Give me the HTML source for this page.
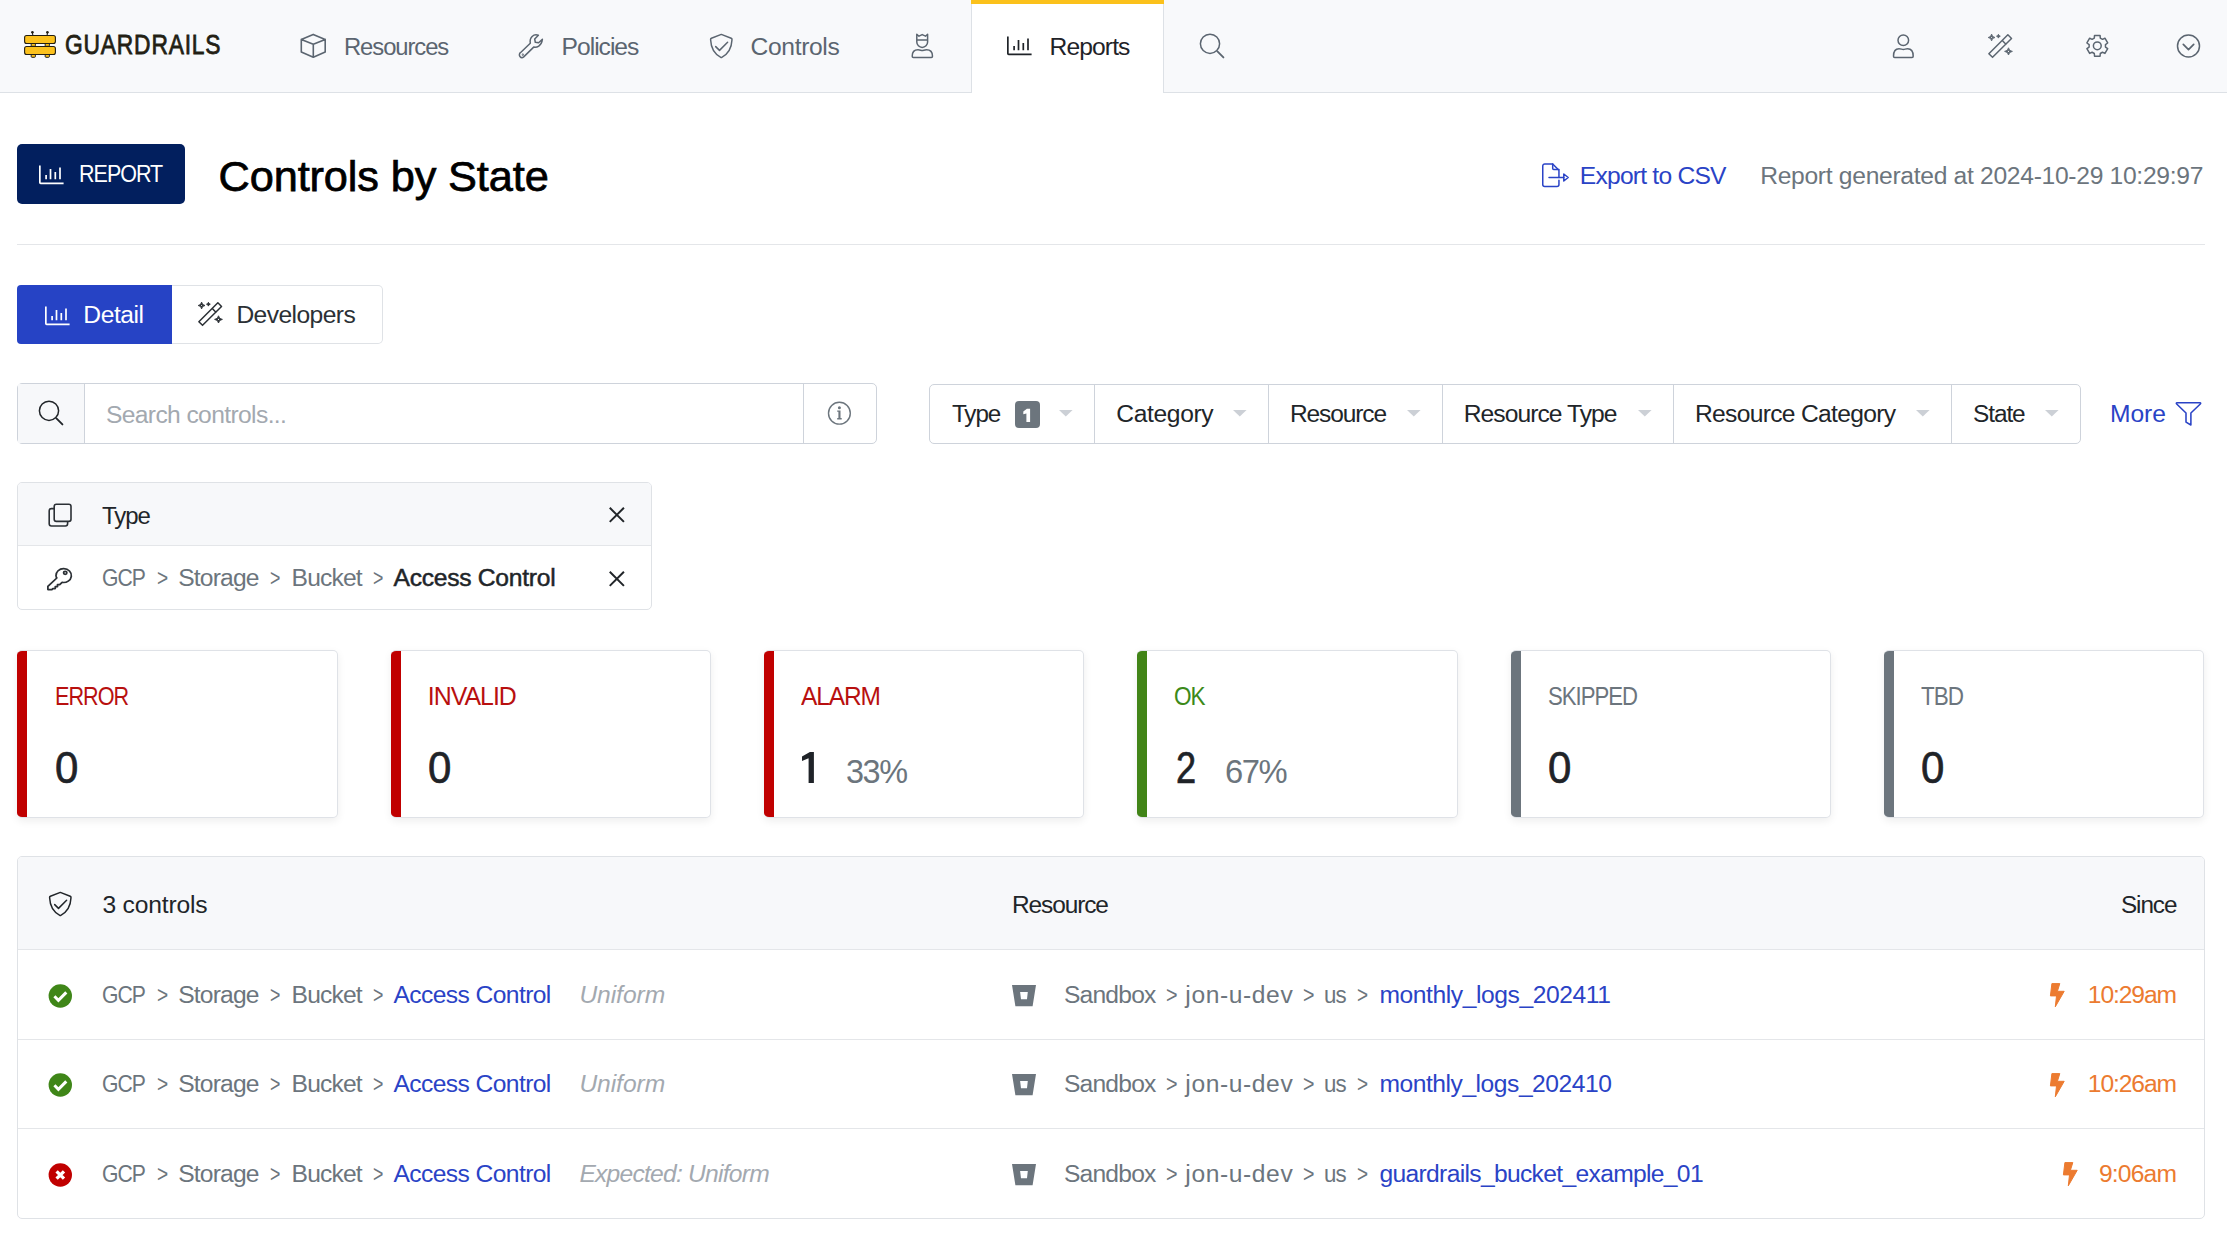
<!DOCTYPE html><html><head><meta charset="utf-8"><style>
html,body{margin:0;padding:0;background:#fff;width:2227px;height:1254px;overflow:hidden;position:relative}
.t{position:absolute;white-space:nowrap;line-height:1;font-family:"Liberation Sans",sans-serif}
svg{overflow:visible}
</style></head><body>
<div style="position:absolute;left:0px;top:0px;width:2227px;height:92px;background:#f8f9fb"></div>
<div style="position:absolute;left:0px;top:92px;width:2227px;height:1px;background:#dde1e6"></div>
<div style="position:absolute;left:971px;top:0px;width:193px;height:93px;background:#fff"></div>
<div style="position:absolute;left:971px;top:0px;width:1px;height:93px;background:#dde1e6"></div>
<div style="position:absolute;left:1163px;top:0px;width:1px;height:93px;background:#dde1e6"></div>
<div style="position:absolute;left:971px;top:0px;width:193px;height:4px;background:#fbc11b"></div>
<svg style="position:absolute;left:24px;top:31px;" width="32" height="28" viewBox="0 0 32 28" fill="none"><g stroke="#231f14" stroke-width="1.1"><line x1="8.3" y1="1.5" x2="9" y2="5" /><line x1="23.5" y1="1.5" x2="23" y2="5" /></g><circle cx="8.4" cy="1.3" r="1.3" fill="#231f14"/><circle cx="23.4" cy="1.3" r="1.3" fill="#231f14"/><rect x="7.2" y="12.3" width="4.2" height="3" rx="0.8" fill="#fcc11c" stroke="#231f14" stroke-width="1"/><rect x="21.2" y="12.3" width="4.2" height="3" rx="0.8" fill="#fcc11c" stroke="#231f14" stroke-width="1"/><rect x="7.2" y="23.3" width="4.2" height="3" rx="0.8" fill="#fcc11c" stroke="#231f14" stroke-width="1"/><rect x="21.2" y="23.3" width="4.2" height="3" rx="0.8" fill="#fcc11c" stroke="#231f14" stroke-width="1"/><rect x="0.6" y="4.5" width="30.8" height="8" rx="2" fill="#fcc11c" stroke="#231f14" stroke-width="1.1"/><rect x="0.6" y="15.5" width="30.8" height="8" rx="2" fill="#fcc11c" stroke="#231f14" stroke-width="1.1"/></svg>
<div class="t" style="left:64.9px;top:31.4px;font-size:27.9px;font-weight:normal;color:#231f14;transform-origin:0 0;transform:scaleX(0.817);letter-spacing:1px;-webkit-text-stroke:0.8px #231f14">GUARDRAILS</div>
<svg style="position:absolute;left:297px;top:30px;" width="32" height="32" viewBox="0 0 32 32" fill="none"><g stroke="#5b6570" stroke-width="1.6" stroke-linecap="round" stroke-linejoin="round"><path d="M16.2 4.4L4.3 9.4V21.9L16.3 27.3L28.2 21.9V9.4Z M4.3 9.4L16.3 14.3L28.2 9.4 M16.3 14.3V27.3"/></g></svg>
<div class="t" style="left:344.00px;top:34.94px;font-size:24.64px;letter-spacing:-1.109px;color:#5b6570;font-weight:normal;font-style:normal;transform:scaleX(0.9670);transform-origin:0 0;">Resources</div>
<svg style="position:absolute;left:515px;top:30px;" width="32" height="32" viewBox="0 0 32 32" fill="none"><g stroke="#5b6570" stroke-width="1.5" stroke-linecap="round" stroke-linejoin="round"><path d="M15.3 13.2L5.4 22.7A2.4 2.4 0 0 0 8.7 26.9L18.7 17.1C21.5 17.8 26.6 16.3 27.4 9.2L23.6 12.7L20.3 12.3L19.7 9L23.4 5.3C18.5 3.6 14.3 7.5 15.3 13.2Z"/><circle cx="7.8" cy="24.7" r=".35"/></g></svg>
<div class="t" style="left:561.60px;top:34.94px;font-size:24.64px;letter-spacing:-1.011px;color:#5b6570;font-weight:normal;font-style:normal;">Policies</div>
<svg style="position:absolute;left:705px;top:30px;" width="32" height="32" viewBox="0 0 32 32" fill="none"><g stroke="#5b6570" stroke-width="1.5" stroke-linecap="round" stroke-linejoin="round"><path d="M16.3 4.4L6.4 8.3Q5.5 8.7 5.6 9.8C6 18 9.5 24.2 15.8 27.3Q16.3 27.6 16.8 27.3C23 24.2 26.6 18 27 9.8Q27.1 8.7 26.2 8.3Z"/><path d="M10.7 16.6L14.5 20.4L22.6 12.2"/></g></svg>
<div class="t" style="left:750.60px;top:34.94px;font-size:24.64px;letter-spacing:-0.367px;color:#5b6570;font-weight:normal;font-style:normal;">Controls</div>
<svg style="position:absolute;left:906px;top:30px;" width="32" height="32" viewBox="0 0 32 32" fill="none"><g stroke="#5b6570" stroke-width="1.5" stroke-linecap="round" stroke-linejoin="round"><path d="M10.8 4.3V12A5.4 5.4 0 0 0 21.6 12V4.3L19.5 6.2L16.2 4.6L13 6.2Z M10.8 10H21.6"/><path d="M6.2 26.3C6.2 21.5 9 19.8 12 19.8C14 19.8 15 20.5 16.2 20.5C17.4 20.5 18.5 19.8 20.5 19.8C23.5 19.8 26.5 21.5 26.5 26.3Q26.5 27.5 25.3 27.5H7.4Q6.2 27.5 6.2 26.3Z"/></g></svg>
<svg style="position:absolute;left:1006.9px;top:36.3px;" width="26" height="20" viewBox="0 0 26 20" fill="none"><g stroke="#1f2328" stroke-width="1.7" stroke-linecap="butt" stroke-linejoin="round"><path d="M0.85 0.5V17.5Q0.85 18.3 1.65 18.3H24.6"/></g><g stroke="#1f2328" stroke-width="1.7" stroke-linecap="butt" stroke-linejoin="round"><path d="M7.1 10.1V14.2M11.5 4V14.2M16.3 7V14.2M21 2.4V14.2"/></g></svg>
<div class="t" style="left:1049.50px;top:34.84px;font-size:24.64px;letter-spacing:-0.888px;color:#1f2328;font-weight:normal;font-style:normal;">Reports</div>
<svg style="position:absolute;left:1196px;top:30px;" width="32" height="32" viewBox="0 0 32 32" fill="none"><g stroke="#5b6570" stroke-width="1.5" stroke-linecap="round" stroke-linejoin="round"><circle cx="14" cy="13.8" r="9.6"/><path d="M21.4 21.4L27.4 27.4" stroke-width="1.9"/></g></svg>
<svg style="position:absolute;left:1887px;top:30px;" width="32" height="32" viewBox="0 0 32 32" fill="none"><g stroke="#5b6570" stroke-width="1.5" stroke-linecap="round" stroke-linejoin="round"><circle cx="16.3" cy="10.3" r="5.3"/><path d="M6.5 26.2C6.5 21 9 18.8 12 18.8C14 18.8 14.8 19.4 16.3 19.4C17.8 19.4 18.6 18.8 20.6 18.8C23.6 18.8 26.2 21 26.2 26.2Q26.2 27.4 25 27.4H7.7Q6.5 27.4 6.5 26.2Z"/></g></svg>
<svg style="position:absolute;left:1983.3px;top:29px;" width="32" height="32" viewBox="0 0 32 32" fill="none"><g stroke="#5b6570" stroke-width="1.5" stroke-linecap="round" stroke-linejoin="round"><path d="M5.87 24.66L24.87 5.76L28.53 9.44L9.53 28.34Z M19.27 11.56L22.93 15.24"/></g><path d="M8.6 5.1Q9.01 8.09 12.0 8.5Q9.01 8.91 8.6 11.9Q8.19 8.91 5.199999999999999 8.5Q8.19 8.09 8.6 5.1Z M15.4 5.300000000000001Q15.63 6.97 17.3 7.2Q15.63 7.43 15.4 9.1Q15.17 7.43 13.5 7.2Q15.17 6.97 15.4 5.300000000000001Z M25.5 18.799999999999997Q25.97 21.97 29.4 22.4Q25.97 22.83 25.5 26.0Q25.03 22.83 21.6 22.4Q25.03 21.97 25.5 18.799999999999997Z" fill="#5b6570" stroke="#5b6570" stroke-width="0.9" stroke-linejoin="round"/><circle cx="8.6" cy="8.5" r="0.55" fill="#f8f9fb"/><circle cx="25.5" cy="22.4" r="0.6" fill="#f8f9fb"/></svg>
<svg style="position:absolute;left:2081px;top:30px;" width="32" height="32" viewBox="0 0 32 32" fill="none"><g stroke="#5b6570" stroke-width="1.5" stroke-linecap="round" stroke-linejoin="round"><path d="M13.30 8.10L13.54 5.40L19.06 5.40L19.30 8.10L21.47 9.35L23.93 8.21L26.69 12.99L24.47 14.55L24.47 17.05L26.69 18.61L23.93 23.39L21.47 22.25L19.30 23.50L19.06 26.20L13.54 26.20L13.30 23.50L11.13 22.25L8.67 23.39L5.91 18.61L8.13 17.05L8.13 14.55L5.91 12.99L8.67 8.21L11.13 9.35Z"/><circle cx="16.3" cy="15.8" r="3.9"/></g></svg>
<svg style="position:absolute;left:2172px;top:30px;" width="32" height="32" viewBox="0 0 32 32" fill="none"><g stroke="#5b6570" stroke-width="1.5" stroke-linecap="round" stroke-linejoin="round"><circle cx="16.5" cy="16" r="11"/><path d="M11.3 14.4L16.5 19.6L21.7 14.4" stroke-width="1.7"/></g></svg>
<div style="position:absolute;left:17px;top:144px;width:168px;height:60px;background:#021f5e;border-radius:5px"></div>
<svg style="position:absolute;left:38.9px;top:165px;" width="26" height="20" viewBox="0 0 26 20" fill="none"><g stroke="#fff" stroke-width="1.7" stroke-linecap="butt" stroke-linejoin="round"><path d="M0.85 0.5V17.5Q0.85 18.3 1.65 18.3H24.6"/></g><g stroke="#fff" stroke-width="1.7" stroke-linecap="butt" stroke-linejoin="round"><path d="M7.1 10.1V14.2M11.5 4V14.2M16.3 7V14.2M21 2.4V14.2"/></g></svg>
<div class="t" style="left:78.50px;top:162.14px;font-size:24.64px;letter-spacing:-1.109px;color:#fff;font-weight:normal;font-style:normal;transform:scaleX(0.8718);transform-origin:0 0;">REPORT</div>
<div class="t" style="left:218.60px;top:154.85px;font-size:43.30px;letter-spacing:-0.124px;color:#000;font-weight:normal;font-style:normal;-webkit-text-stroke:0.75px #000">Controls by State</div>
<svg style="position:absolute;left:1541px;top:163px;" width="28" height="26" viewBox="0 0 28 26" fill="none"><g stroke="#2a43c6" stroke-width="1.5" stroke-linecap="round" stroke-linejoin="round"><path d="M17.95 14.5V7.2L11.7 0.95H3.75A2 2 0 0 0 1.75 2.95V21.55A2 2 0 0 0 3.75 23.55H15.95A2 2 0 0 0 17.95 21.55V17.3"/><path d="M11.7 0.95V5.5A1 1 0 0 0 12.7 6.5H17.95"/><path d="M8 14.5H22.8"/><path d="M22.8 11L27.2 14.5L22.8 18Z"/></g></svg>
<div class="t" style="left:1579.80px;top:164.04px;font-size:24.64px;letter-spacing:-0.781px;color:#2a43c6;font-weight:normal;font-style:normal;">Export to CSV</div>
<div class="t" style="left:1760.20px;top:164.04px;font-size:24.64px;letter-spacing:-0.300px;color:#6c757d;font-weight:normal;font-style:normal;">Report generated at 2024-10-29 10:29:97</div>
<div style="position:absolute;left:17px;top:244px;width:2188px;height:1px;background:#e4e6e9"></div>
<div style="position:absolute;left:17px;top:285px;width:155px;height:59px;background:#2643c5;border-radius:4px 0 0 4px"></div>
<svg style="position:absolute;left:44.6px;top:305.5px;" width="26" height="20" viewBox="0 0 26 20" fill="none"><g stroke="#fff" stroke-width="1.7" stroke-linecap="butt" stroke-linejoin="round"><path d="M0.85 0.5V17.5Q0.85 18.3 1.65 18.3H24.6"/></g><g stroke="#fff" stroke-width="1.7" stroke-linecap="butt" stroke-linejoin="round"><path d="M7.1 10.1V14.2M11.5 4V14.2M16.3 7V14.2M21 2.4V14.2"/></g></svg>
<div class="t" style="left:83.30px;top:303.44px;font-size:24.64px;letter-spacing:-0.449px;color:#fff;font-weight:normal;font-style:normal;">Detail</div>
<div style="position:absolute;left:172px;top:285px;width:211px;height:59px;box-sizing:border-box;border:1px solid #dfe2e6;border-left:none;border-radius:0 5px 5px 0"></div>
<svg style="position:absolute;left:193px;top:297px;" width="32" height="32" viewBox="0 0 32 32" fill="none"><g stroke="#2b3035" stroke-width="1.5" stroke-linecap="round" stroke-linejoin="round"><path d="M5.87 24.66L24.87 5.76L28.53 9.44L9.53 28.34Z M19.27 11.56L22.93 15.24"/></g><path d="M8.6 5.1Q9.01 8.09 12.0 8.5Q9.01 8.91 8.6 11.9Q8.19 8.91 5.199999999999999 8.5Q8.19 8.09 8.6 5.1Z M15.4 5.300000000000001Q15.63 6.97 17.3 7.2Q15.63 7.43 15.4 9.1Q15.17 7.43 13.5 7.2Q15.17 6.97 15.4 5.300000000000001Z M25.5 18.799999999999997Q25.97 21.97 29.4 22.4Q25.97 22.83 25.5 26.0Q25.03 22.83 21.6 22.4Q25.03 21.97 25.5 18.799999999999997Z" fill="#2b3035" stroke="#2b3035" stroke-width="0.9" stroke-linejoin="round"/><circle cx="8.6" cy="8.5" r="0.55" fill="#fff"/><circle cx="25.5" cy="22.4" r="0.6" fill="#fff"/></svg>
<div class="t" style="left:236.40px;top:303.44px;font-size:24.64px;letter-spacing:-0.574px;color:#2b3035;font-weight:normal;font-style:normal;">Developers</div>
<div style="position:absolute;left:17px;top:383px;width:860px;height:61px;box-sizing:border-box;border:1px solid #ced3db;border-radius:5px;overflow:hidden"></div>
<div style="position:absolute;left:18px;top:384px;width:66px;height:59px;background:#f7f8fa"></div>
<div style="position:absolute;left:84px;top:384px;width:1px;height:59px;background:#ced3db"></div>
<div style="position:absolute;left:803px;top:384px;width:1px;height:59px;background:#ced3db"></div>
<svg style="position:absolute;left:34.8px;top:397.4px;" width="32" height="32" viewBox="0 0 32 32" fill="none"><g stroke="#212529" stroke-width="1.5" stroke-linecap="round" stroke-linejoin="round"><circle cx="14" cy="13.8" r="9.6"/><path d="M21.4 21.4L27.4 27.4" stroke-width="1.9"/></g></svg>
<div class="t" style="left:105.90px;top:402.94px;font-size:24.64px;letter-spacing:-0.622px;color:#a3a9b0;font-weight:normal;font-style:normal;">Search controls...</div>
<svg style="position:absolute;left:820px;top:396px;" width="40" height="36" viewBox="0 0 40 36" fill="none"><g stroke="#6c757d" stroke-width="1.4" stroke-linecap="round" stroke-linejoin="round"><circle cx="19.4" cy="17.2" r="10.9"/></g><circle cx="19.4" cy="11.8" r="1.5" fill="#6c757d"/><path d="M17.2 14.4H20.5V22.1H21.7V23.5H17.2V22.1H18.4V15.8H17.2Z" fill="#6c757d"/></svg>
<div style="position:absolute;left:929px;top:384px;width:1152px;height:60px;box-sizing:border-box;border:1px solid #ced3db;border-radius:5px"></div>
<div style="position:absolute;left:1094px;top:385px;width:1px;height:58px;background:#ced3db"></div>
<div style="position:absolute;left:1268px;top:385px;width:1px;height:58px;background:#ced3db"></div>
<div style="position:absolute;left:1442px;top:385px;width:1px;height:58px;background:#ced3db"></div>
<div style="position:absolute;left:1673px;top:385px;width:1px;height:58px;background:#ced3db"></div>
<div style="position:absolute;left:1951px;top:385px;width:1px;height:58px;background:#ced3db"></div>
<div class="t" style="left:951.90px;top:402.14px;font-size:24.64px;letter-spacing:-1.109px;color:#212529;font-weight:normal;font-style:normal;transform:scaleX(0.9833);transform-origin:0 0;">Type</div>
<div style="position:absolute;left:1015px;top:401px;width:25px;height:27px;background:#6c757d;border-radius:4px"></div>
<svg style="position:absolute;left:1020px;top:405px;" width="14" height="20" viewBox="0 0 14 20" fill="none"><path d="M10.1 3.8V16.9H6.4V8.4L3.3 9.3V6.5L6.9 3.8Z" fill="#fff"/></svg>
<svg style="position:absolute;left:1059.0px;top:410px;" width="14" height="7" viewBox="0 0 14 7" fill="none"><path d="M0 0h13.6L6.8 6.6z" fill="#ccd0d6"/></svg>
<div class="t" style="left:1116.30px;top:402.14px;font-size:24.64px;letter-spacing:-0.375px;color:#212529;font-weight:normal;font-style:normal;">Category</div>
<svg style="position:absolute;left:1233.0px;top:410px;" width="14" height="7" viewBox="0 0 14 7" fill="none"><path d="M0 0h13.6L6.8 6.6z" fill="#ccd0d6"/></svg>
<div class="t" style="left:1290.10px;top:402.14px;font-size:24.64px;letter-spacing:-1.109px;color:#212529;font-weight:normal;font-style:normal;transform:scaleX(0.9950);transform-origin:0 0;">Resource</div>
<svg style="position:absolute;left:1407.0px;top:410px;" width="14" height="7" viewBox="0 0 14 7" fill="none"><path d="M0 0h13.6L6.8 6.6z" fill="#ccd0d6"/></svg>
<div class="t" style="left:1463.70px;top:402.14px;font-size:24.64px;letter-spacing:-0.943px;color:#212529;font-weight:normal;font-style:normal;">Resource Type</div>
<svg style="position:absolute;left:1638.0px;top:410px;" width="14" height="7" viewBox="0 0 14 7" fill="none"><path d="M0 0h13.6L6.8 6.6z" fill="#ccd0d6"/></svg>
<div class="t" style="left:1694.90px;top:402.14px;font-size:24.64px;letter-spacing:-0.684px;color:#212529;font-weight:normal;font-style:normal;">Resource Category</div>
<svg style="position:absolute;left:1916.0px;top:410px;" width="14" height="7" viewBox="0 0 14 7" fill="none"><path d="M0 0h13.6L6.8 6.6z" fill="#ccd0d6"/></svg>
<div class="t" style="left:1973.00px;top:402.14px;font-size:24.64px;letter-spacing:-1.109px;color:#212529;font-weight:normal;font-style:normal;transform:scaleX(0.9926);transform-origin:0 0;">State</div>
<svg style="position:absolute;left:2045.0px;top:410px;" width="14" height="7" viewBox="0 0 14 7" fill="none"><path d="M0 0h13.6L6.8 6.6z" fill="#ccd0d6"/></svg>
<div class="t" style="left:2110.10px;top:402.14px;font-size:24.64px;letter-spacing:-0.124px;color:#2a43c6;font-weight:normal;font-style:normal;">More</div>
<svg style="position:absolute;left:2165px;top:390px;" width="45" height="50" viewBox="0 0 45 50" fill="none"><path d="M12 12.8H35Q36.2 12.9 35.3 14L25.9 23V35L21 32.1V23L11.7 14Q10.8 12.9 12 12.8Z" stroke="#2a43c6" stroke-width="1.55" stroke-linejoin="round" fill="none"/></svg>
<div style="position:absolute;left:17px;top:482px;width:635px;height:128px;box-sizing:border-box;border:1px solid #dfe2e6;border-radius:5px;overflow:hidden"></div>
<div style="position:absolute;left:18px;top:483px;width:633px;height:62px;background:#f7f8fa;border-radius:4px 4px 0 0"></div>
<div style="position:absolute;left:18px;top:545px;width:633px;height:1px;background:#e4e6e9"></div>
<svg style="position:absolute;left:40px;top:495px;" width="40" height="40" viewBox="0 0 40 40" fill="none"><g stroke="#2b3035" stroke-width="1.6" stroke-linejoin="round" fill="none"><rect x="14.2" y="9.2" width="16.8" height="17.2" rx="2.2"/><path d="M14.2 13.6H11.4A2.2 2.2 0 0 0 9.2 15.8V28.8A2.2 2.2 0 0 0 11.4 31H25.4A2.2 2.2 0 0 0 27.6 28.8V26.4"/></g></svg>
<div class="t" style="left:102.30px;top:503.54px;font-size:24.64px;letter-spacing:-1.109px;color:#212529;font-weight:normal;font-style:normal;transform:scaleX(0.9734);transform-origin:0 0;">Type</div>
<svg style="position:absolute;left:608.5px;top:507.3px;" width="15.70" height="15.60" viewBox="0.2 0.2 16.6 16.6" preserveAspectRatio="none" fill="none"><g stroke="#212529" stroke-width="2.1" stroke-linecap="butt"><path d="M1 1l15 15M16 1L1 16"/></g></svg>
<svg style="position:absolute;left:47.3px;top:567.1px;" width="25.40" height="23.50" viewBox="2.5 0.7 23.0 23.7" preserveAspectRatio="none" fill="none"><g stroke="#2b3035" stroke-width="1.6" stroke-linejoin="round"><path d="M10.6 9.8a7 7 0 1 1 5.6 6.4l-2.2 2.3h-2v2h-2v2h-2.2l-.9 1H3.3v-3.3l8.1-8.4a7 7 0 0 1-.8-2"/><circle cx="19" cy="6.6" r="1.5"/></g></svg>
<div class="t" style="left:102.30px;top:566.14px;font-size:24.64px;letter-spacing:-1.109px;color:#6c757d;font-weight:normal;font-style:normal;transform:scaleX(0.8587);transform-origin:0 0;">GCP</div>
<div class="t" style="left:156.60px;top:566.14px;font-size:24.64px;letter-spacing:0.000px;color:#6c757d;font-weight:normal;font-style:normal;transform:scaleX(0.7771);transform-origin:0 0;">></div>
<div class="t" style="left:178.20px;top:566.14px;font-size:24.64px;letter-spacing:-0.825px;color:#6c757d;font-weight:normal;font-style:normal;">Storage</div>
<div class="t" style="left:270.10px;top:566.14px;font-size:24.64px;letter-spacing:0.000px;color:#6c757d;font-weight:normal;font-style:normal;transform:scaleX(0.7216);transform-origin:0 0;">></div>
<div class="t" style="left:291.60px;top:566.14px;font-size:24.64px;letter-spacing:-0.853px;color:#6c757d;font-weight:normal;font-style:normal;">Bucket</div>
<div class="t" style="left:373.10px;top:566.14px;font-size:24.64px;letter-spacing:0.000px;color:#6c757d;font-weight:normal;font-style:normal;transform:scaleX(0.7216);transform-origin:0 0;">></div>
<div class="t" style="left:393.50px;top:566.14px;font-size:24.64px;letter-spacing:-0.268px;color:#212529;font-weight:normal;font-style:normal;-webkit-text-stroke:0.5px #212529;">Access Control</div>
<svg style="position:absolute;left:608.5px;top:570.6px;" width="15.70" height="15.60" viewBox="0.2 0.2 16.6 16.6" preserveAspectRatio="none" fill="none"><g stroke="#212529" stroke-width="2.1" stroke-linecap="butt"><path d="M1 1l15 15M16 1L1 16"/></g></svg>
<div style="position:absolute;left:17.3px;top:650px;width:320.5px;height:168px;box-sizing:border-box;border:1px solid #dfe2e7;border-left:none;border-radius:5px;background:#fff;box-shadow:0 3px 8px rgba(0,0,0,0.07);overflow:hidden"><div style="position:absolute;left:0;top:0;width:10px;height:100%;background:#c00000"></div></div>
<div class="t" style="left:54.50px;top:683.91px;font-size:24.91px;letter-spacing:-1.121px;color:#b8100f;font-weight:normal;font-style:normal;transform:scaleX(0.8672);transform-origin:0 0;">ERROR</div>
<div class="t" style="left:54.50px;top:745.84px;font-size:44.13px;letter-spacing:0.000px;color:#1f2328;font-weight:normal;font-style:normal;transform:scaleX(0.9512);transform-origin:0 0;-webkit-text-stroke:0.7px #1f2328">0</div>
<div style="position:absolute;left:390.6px;top:650px;width:320.5px;height:168px;box-sizing:border-box;border:1px solid #dfe2e7;border-left:none;border-radius:5px;background:#fff;box-shadow:0 3px 8px rgba(0,0,0,0.07);overflow:hidden"><div style="position:absolute;left:0;top:0;width:10px;height:100%;background:#c00000"></div></div>
<div class="t" style="left:427.80px;top:683.91px;font-size:24.91px;letter-spacing:-1.006px;color:#b8100f;font-weight:normal;font-style:normal;">INVALID</div>
<div class="t" style="left:427.80px;top:745.84px;font-size:44.13px;letter-spacing:0.000px;color:#1f2328;font-weight:normal;font-style:normal;transform:scaleX(0.9512);transform-origin:0 0;-webkit-text-stroke:0.7px #1f2328">0</div>
<div style="position:absolute;left:763.9px;top:650px;width:320.5px;height:168px;box-sizing:border-box;border:1px solid #dfe2e7;border-left:none;border-radius:5px;background:#fff;box-shadow:0 3px 8px rgba(0,0,0,0.07);overflow:hidden"><div style="position:absolute;left:0;top:0;width:10px;height:100%;background:#c00000"></div></div>
<div class="t" style="left:801.10px;top:683.91px;font-size:24.91px;letter-spacing:-1.121px;color:#b8100f;font-weight:normal;font-style:normal;transform:scaleX(0.9836);transform-origin:0 0;">ALARM</div>
<svg style="position:absolute;left:800px;top:750px;" width="16" height="35" viewBox="0 0 16 35" fill="none"><path d="M13.9 1.9V33H8.6V8.3L2 10.9V6.4L9.9 1.9Z" fill="#1f2328"/></svg>
<div class="t" style="left:846.00px;top:754.61px;font-size:33.66px;letter-spacing:-1.515px;color:#6c757d;font-weight:normal;font-style:normal;transform:scaleX(0.9628);transform-origin:0 0;">33%</div>
<div style="position:absolute;left:1137.2px;top:650px;width:320.5px;height:168px;box-sizing:border-box;border:1px solid #dfe2e7;border-left:none;border-radius:5px;background:#fff;box-shadow:0 3px 8px rgba(0,0,0,0.07);overflow:hidden"><div style="position:absolute;left:0;top:0;width:10px;height:100%;background:#418417"></div></div>
<div class="t" style="left:1174.40px;top:683.91px;font-size:24.91px;letter-spacing:-1.121px;color:#3c8a1a;font-weight:normal;font-style:normal;transform:scaleX(0.9061);transform-origin:0 0;">OK</div>
<div class="t" style="left:1175.50px;top:745.94px;font-size:44.13px;letter-spacing:0.000px;color:#1f2328;font-weight:normal;font-style:normal;transform:scaleX(0.8206);transform-origin:0 0;-webkit-text-stroke:0.7px #1f2328">2</div>
<div class="t" style="left:1225.40px;top:754.61px;font-size:33.66px;letter-spacing:-1.515px;color:#6c757d;font-weight:normal;font-style:normal;transform:scaleX(0.9737);transform-origin:0 0;">67%</div>
<div style="position:absolute;left:1510.5px;top:650px;width:320.5px;height:168px;box-sizing:border-box;border:1px solid #dfe2e7;border-left:none;border-radius:5px;background:#fff;box-shadow:0 3px 8px rgba(0,0,0,0.07);overflow:hidden"><div style="position:absolute;left:0;top:0;width:10px;height:100%;background:#6c757d"></div></div>
<div class="t" style="left:1547.70px;top:683.91px;font-size:24.91px;letter-spacing:-1.121px;color:#6c757d;font-weight:normal;font-style:normal;transform:scaleX(0.8888);transform-origin:0 0;">SKIPPED</div>
<div class="t" style="left:1547.70px;top:745.84px;font-size:44.13px;letter-spacing:0.000px;color:#1f2328;font-weight:normal;font-style:normal;transform:scaleX(0.9512);transform-origin:0 0;-webkit-text-stroke:0.7px #1f2328">0</div>
<div style="position:absolute;left:1883.8px;top:650px;width:320.5px;height:168px;box-sizing:border-box;border:1px solid #dfe2e7;border-left:none;border-radius:5px;background:#fff;box-shadow:0 3px 8px rgba(0,0,0,0.07);overflow:hidden"><div style="position:absolute;left:0;top:0;width:10px;height:100%;background:#6c757d"></div></div>
<div class="t" style="left:1921.00px;top:683.91px;font-size:24.91px;letter-spacing:-1.121px;color:#6c757d;font-weight:normal;font-style:normal;transform:scaleX(0.9038);transform-origin:0 0;">TBD</div>
<div class="t" style="left:1921.00px;top:745.84px;font-size:44.13px;letter-spacing:0.000px;color:#1f2328;font-weight:normal;font-style:normal;transform:scaleX(0.9512);transform-origin:0 0;-webkit-text-stroke:0.7px #1f2328">0</div>
<div style="position:absolute;left:17px;top:856px;width:2188px;height:363px;box-sizing:border-box;border:1px solid #dfe2e6;border-radius:5px;overflow:hidden"></div>
<div style="position:absolute;left:18px;top:857px;width:2186px;height:92px;background:#f7f8fa;border-radius:4px 4px 0 0"></div>
<div style="position:absolute;left:18px;top:949px;width:2186px;height:1px;background:#e4e6e9"></div>
<div style="position:absolute;left:18px;top:1039px;width:2186px;height:1px;background:#e4e6e9"></div>
<div style="position:absolute;left:18px;top:1128px;width:2186px;height:1px;background:#e4e6e9"></div>
<svg style="position:absolute;left:44px;top:888px;" width="32" height="32" viewBox="0 0 32 32" fill="none"><g stroke="#212529" stroke-width="1.5" stroke-linecap="round" stroke-linejoin="round"><path d="M16.3 4.4L6.4 8.3Q5.5 8.7 5.6 9.8C6 18 9.5 24.2 15.8 27.3Q16.3 27.6 16.8 27.3C23 24.2 26.6 18 27 9.8Q27.1 8.7 26.2 8.3Z"/><path d="M10.7 16.6L14.5 20.4L22.6 12.2"/></g></svg>
<div class="t" style="left:102.40px;top:892.74px;font-size:24.64px;letter-spacing:-0.178px;color:#212529;font-weight:normal;font-style:normal;">3 controls</div>
<div class="t" style="left:1012.30px;top:892.74px;font-size:24.64px;letter-spacing:-1.109px;color:#212529;font-weight:normal;font-style:normal;transform:scaleX(0.9930);transform-origin:0 0;">Resource</div>
<div class="t" style="left:2121.00px;top:892.74px;font-size:24.64px;letter-spacing:-1.109px;color:#212529;font-weight:normal;font-style:normal;transform:scaleX(0.9867);transform-origin:0 0;">Since</div>
<svg style="position:absolute;left:44px;top:978.5px;" width="32" height="32" viewBox="0 0 32 32" fill="none"><circle cx="16.3" cy="17" r="11.7" fill="#3f8618"/><path d="M10.4 17.3L14.4 21.3L22.3 13.4" stroke="#fff" stroke-width="3" fill="none"/></svg>
<div class="t" style="left:102.30px;top:982.94px;font-size:24.64px;letter-spacing:-1.109px;color:#6c757d;font-weight:normal;font-style:normal;transform:scaleX(0.8587);transform-origin:0 0;">GCP</div>
<div class="t" style="left:156.60px;top:982.94px;font-size:24.64px;letter-spacing:0.000px;color:#6c757d;font-weight:normal;font-style:normal;transform:scaleX(0.7771);transform-origin:0 0;">></div>
<div class="t" style="left:178.20px;top:982.94px;font-size:24.64px;letter-spacing:-0.825px;color:#6c757d;font-weight:normal;font-style:normal;">Storage</div>
<div class="t" style="left:270.10px;top:982.94px;font-size:24.64px;letter-spacing:0.000px;color:#6c757d;font-weight:normal;font-style:normal;transform:scaleX(0.7216);transform-origin:0 0;">></div>
<div class="t" style="left:291.60px;top:982.94px;font-size:24.64px;letter-spacing:-0.853px;color:#6c757d;font-weight:normal;font-style:normal;">Bucket</div>
<div class="t" style="left:373.10px;top:982.94px;font-size:24.64px;letter-spacing:0.000px;color:#6c757d;font-weight:normal;font-style:normal;transform:scaleX(0.7216);transform-origin:0 0;">></div>
<div class="t" style="left:393.50px;top:982.94px;font-size:24.64px;letter-spacing:-0.599px;color:#2a43c6;font-weight:normal;font-style:normal;">Access Control</div>
<div class="t" style="left:579.40px;top:982.94px;font-size:24.64px;letter-spacing:-0.072px;color:#a3a9b0;font-weight:normal;font-style:italic;">Uniform</div>
<svg style="position:absolute;left:1012.2px;top:984.6px;" width="24" height="21.3" viewBox="0 0 24 21.3" fill="none"><path fill="#6c757d" fill-rule="evenodd" d="M0 0H24L20.6 21.3H3.4z M8.1 7H15.8L15 14.3H9z"/></svg>
<div class="t" style="left:1063.90px;top:982.94px;font-size:24.64px;letter-spacing:-0.786px;color:#6c757d;font-weight:normal;font-style:normal;">Sandbox</div>
<div class="t" style="left:1166.10px;top:982.94px;font-size:24.64px;letter-spacing:0.000px;color:#6c757d;font-weight:normal;font-style:normal;transform:scaleX(0.8049);transform-origin:0 0;">></div>
<div class="t" style="left:1185.32px;top:982.94px;font-size:24.64px;letter-spacing:0.594px;color:#6c757d;font-weight:normal;font-style:normal;">jon-u-dev</div>
<div class="t" style="left:1302.50px;top:982.94px;font-size:24.64px;letter-spacing:0.000px;color:#6c757d;font-weight:normal;font-style:normal;transform:scaleX(0.7979);transform-origin:0 0;">></div>
<div class="t" style="left:1324.40px;top:982.94px;font-size:24.64px;letter-spacing:-1.109px;color:#6c757d;font-weight:normal;font-style:normal;transform:scaleX(0.9042);transform-origin:0 0;">us</div>
<div class="t" style="left:1357.30px;top:982.94px;font-size:24.64px;letter-spacing:0.000px;color:#6c757d;font-weight:normal;font-style:normal;transform:scaleX(0.7702);transform-origin:0 0;">></div>
<div class="t" style="left:1379.50px;top:982.94px;font-size:24.64px;letter-spacing:-0.429px;color:#2a43c6;font-weight:normal;font-style:normal;">monthly_logs_202411</div>
<svg style="position:absolute;left:2040px;top:975.0px;" width="40" height="40" viewBox="0 0 40 40" fill="none"><path fill="#ec7b30" stroke="#ec7b30" stroke-width="1" stroke-linejoin="round" d="M11.9 8.6H19.8L17.4 16.3H24.2L15.3 31.8L16.5 20.9H10.4Z"/></svg>
<div class="t" style="left:2087.80px;top:982.94px;font-size:24.64px;letter-spacing:-1.106px;color:#ec7b30;font-weight:normal;font-style:normal;">10:29am</div>
<svg style="position:absolute;left:44px;top:1068.0px;" width="32" height="32" viewBox="0 0 32 32" fill="none"><circle cx="16.3" cy="17" r="11.7" fill="#3f8618"/><path d="M10.4 17.3L14.4 21.3L22.3 13.4" stroke="#fff" stroke-width="3" fill="none"/></svg>
<div class="t" style="left:102.30px;top:1072.44px;font-size:24.64px;letter-spacing:-1.109px;color:#6c757d;font-weight:normal;font-style:normal;transform:scaleX(0.8587);transform-origin:0 0;">GCP</div>
<div class="t" style="left:156.60px;top:1072.44px;font-size:24.64px;letter-spacing:0.000px;color:#6c757d;font-weight:normal;font-style:normal;transform:scaleX(0.7771);transform-origin:0 0;">></div>
<div class="t" style="left:178.20px;top:1072.44px;font-size:24.64px;letter-spacing:-0.825px;color:#6c757d;font-weight:normal;font-style:normal;">Storage</div>
<div class="t" style="left:270.10px;top:1072.44px;font-size:24.64px;letter-spacing:0.000px;color:#6c757d;font-weight:normal;font-style:normal;transform:scaleX(0.7216);transform-origin:0 0;">></div>
<div class="t" style="left:291.60px;top:1072.44px;font-size:24.64px;letter-spacing:-0.853px;color:#6c757d;font-weight:normal;font-style:normal;">Bucket</div>
<div class="t" style="left:373.10px;top:1072.44px;font-size:24.64px;letter-spacing:0.000px;color:#6c757d;font-weight:normal;font-style:normal;transform:scaleX(0.7216);transform-origin:0 0;">></div>
<div class="t" style="left:393.50px;top:1072.44px;font-size:24.64px;letter-spacing:-0.599px;color:#2a43c6;font-weight:normal;font-style:normal;">Access Control</div>
<div class="t" style="left:579.40px;top:1072.44px;font-size:24.64px;letter-spacing:-0.072px;color:#a3a9b0;font-weight:normal;font-style:italic;">Uniform</div>
<svg style="position:absolute;left:1012.2px;top:1074.1px;" width="24" height="21.3" viewBox="0 0 24 21.3" fill="none"><path fill="#6c757d" fill-rule="evenodd" d="M0 0H24L20.6 21.3H3.4z M8.1 7H15.8L15 14.3H9z"/></svg>
<div class="t" style="left:1063.90px;top:1072.44px;font-size:24.64px;letter-spacing:-0.786px;color:#6c757d;font-weight:normal;font-style:normal;">Sandbox</div>
<div class="t" style="left:1166.10px;top:1072.44px;font-size:24.64px;letter-spacing:0.000px;color:#6c757d;font-weight:normal;font-style:normal;transform:scaleX(0.8049);transform-origin:0 0;">></div>
<div class="t" style="left:1185.32px;top:1072.44px;font-size:24.64px;letter-spacing:0.594px;color:#6c757d;font-weight:normal;font-style:normal;">jon-u-dev</div>
<div class="t" style="left:1302.50px;top:1072.44px;font-size:24.64px;letter-spacing:0.000px;color:#6c757d;font-weight:normal;font-style:normal;transform:scaleX(0.7979);transform-origin:0 0;">></div>
<div class="t" style="left:1324.40px;top:1072.44px;font-size:24.64px;letter-spacing:-1.109px;color:#6c757d;font-weight:normal;font-style:normal;transform:scaleX(0.9042);transform-origin:0 0;">us</div>
<div class="t" style="left:1357.30px;top:1072.44px;font-size:24.64px;letter-spacing:0.000px;color:#6c757d;font-weight:normal;font-style:normal;transform:scaleX(0.7702);transform-origin:0 0;">></div>
<div class="t" style="left:1379.50px;top:1072.44px;font-size:24.64px;letter-spacing:-0.476px;color:#2a43c6;font-weight:normal;font-style:normal;">monthly_logs_202410</div>
<svg style="position:absolute;left:2040px;top:1064.5px;" width="40" height="40" viewBox="0 0 40 40" fill="none"><path fill="#ec7b30" stroke="#ec7b30" stroke-width="1" stroke-linejoin="round" d="M11.9 8.6H19.8L17.4 16.3H24.2L15.3 31.8L16.5 20.9H10.4Z"/></svg>
<div class="t" style="left:2087.80px;top:1072.44px;font-size:24.64px;letter-spacing:-1.106px;color:#ec7b30;font-weight:normal;font-style:normal;">10:26am</div>
<svg style="position:absolute;left:44px;top:1157.5px;" width="32" height="32" viewBox="0 0 32 32" fill="none"><circle cx="16.3" cy="17" r="11.7" fill="#c00000"/><path d="M12.6 13.3L20 20.7M20 13.3L12.6 20.7" stroke="#fff" stroke-width="3.3" fill="none"/></svg>
<div class="t" style="left:102.30px;top:1161.94px;font-size:24.64px;letter-spacing:-1.109px;color:#6c757d;font-weight:normal;font-style:normal;transform:scaleX(0.8587);transform-origin:0 0;">GCP</div>
<div class="t" style="left:156.60px;top:1161.94px;font-size:24.64px;letter-spacing:0.000px;color:#6c757d;font-weight:normal;font-style:normal;transform:scaleX(0.7771);transform-origin:0 0;">></div>
<div class="t" style="left:178.20px;top:1161.94px;font-size:24.64px;letter-spacing:-0.825px;color:#6c757d;font-weight:normal;font-style:normal;">Storage</div>
<div class="t" style="left:270.10px;top:1161.94px;font-size:24.64px;letter-spacing:0.000px;color:#6c757d;font-weight:normal;font-style:normal;transform:scaleX(0.7216);transform-origin:0 0;">></div>
<div class="t" style="left:291.60px;top:1161.94px;font-size:24.64px;letter-spacing:-0.853px;color:#6c757d;font-weight:normal;font-style:normal;">Bucket</div>
<div class="t" style="left:373.10px;top:1161.94px;font-size:24.64px;letter-spacing:0.000px;color:#6c757d;font-weight:normal;font-style:normal;transform:scaleX(0.7216);transform-origin:0 0;">></div>
<div class="t" style="left:393.50px;top:1161.94px;font-size:24.64px;letter-spacing:-0.599px;color:#2a43c6;font-weight:normal;font-style:normal;">Access Control</div>
<div class="t" style="left:579.40px;top:1161.94px;font-size:24.64px;letter-spacing:-0.765px;color:#a3a9b0;font-weight:normal;font-style:italic;">Expected: Uniform</div>
<svg style="position:absolute;left:1012.2px;top:1163.6px;" width="24" height="21.3" viewBox="0 0 24 21.3" fill="none"><path fill="#6c757d" fill-rule="evenodd" d="M0 0H24L20.6 21.3H3.4z M8.1 7H15.8L15 14.3H9z"/></svg>
<div class="t" style="left:1063.90px;top:1161.94px;font-size:24.64px;letter-spacing:-0.786px;color:#6c757d;font-weight:normal;font-style:normal;">Sandbox</div>
<div class="t" style="left:1166.10px;top:1161.94px;font-size:24.64px;letter-spacing:0.000px;color:#6c757d;font-weight:normal;font-style:normal;transform:scaleX(0.8049);transform-origin:0 0;">></div>
<div class="t" style="left:1185.32px;top:1161.94px;font-size:24.64px;letter-spacing:0.594px;color:#6c757d;font-weight:normal;font-style:normal;">jon-u-dev</div>
<div class="t" style="left:1302.50px;top:1161.94px;font-size:24.64px;letter-spacing:0.000px;color:#6c757d;font-weight:normal;font-style:normal;transform:scaleX(0.7979);transform-origin:0 0;">></div>
<div class="t" style="left:1324.40px;top:1161.94px;font-size:24.64px;letter-spacing:-1.109px;color:#6c757d;font-weight:normal;font-style:normal;transform:scaleX(0.9042);transform-origin:0 0;">us</div>
<div class="t" style="left:1357.30px;top:1161.94px;font-size:24.64px;letter-spacing:0.000px;color:#6c757d;font-weight:normal;font-style:normal;transform:scaleX(0.7702);transform-origin:0 0;">></div>
<div class="t" style="left:1379.50px;top:1161.94px;font-size:24.64px;letter-spacing:-0.672px;color:#2a43c6;font-weight:normal;font-style:normal;">guardrails_bucket_example_01</div>
<svg style="position:absolute;left:2053px;top:1154.0px;" width="40" height="40" viewBox="0 0 40 40" fill="none"><path fill="#ec7b30" stroke="#ec7b30" stroke-width="1" stroke-linejoin="round" d="M11.9 8.6H19.8L17.4 16.3H24.2L15.3 31.8L16.5 20.9H10.4Z"/></svg>
<div class="t" style="left:2099.00px;top:1161.94px;font-size:24.64px;letter-spacing:-0.833px;color:#ec7b30;font-weight:normal;font-style:normal;">9:06am</div>
</body></html>
